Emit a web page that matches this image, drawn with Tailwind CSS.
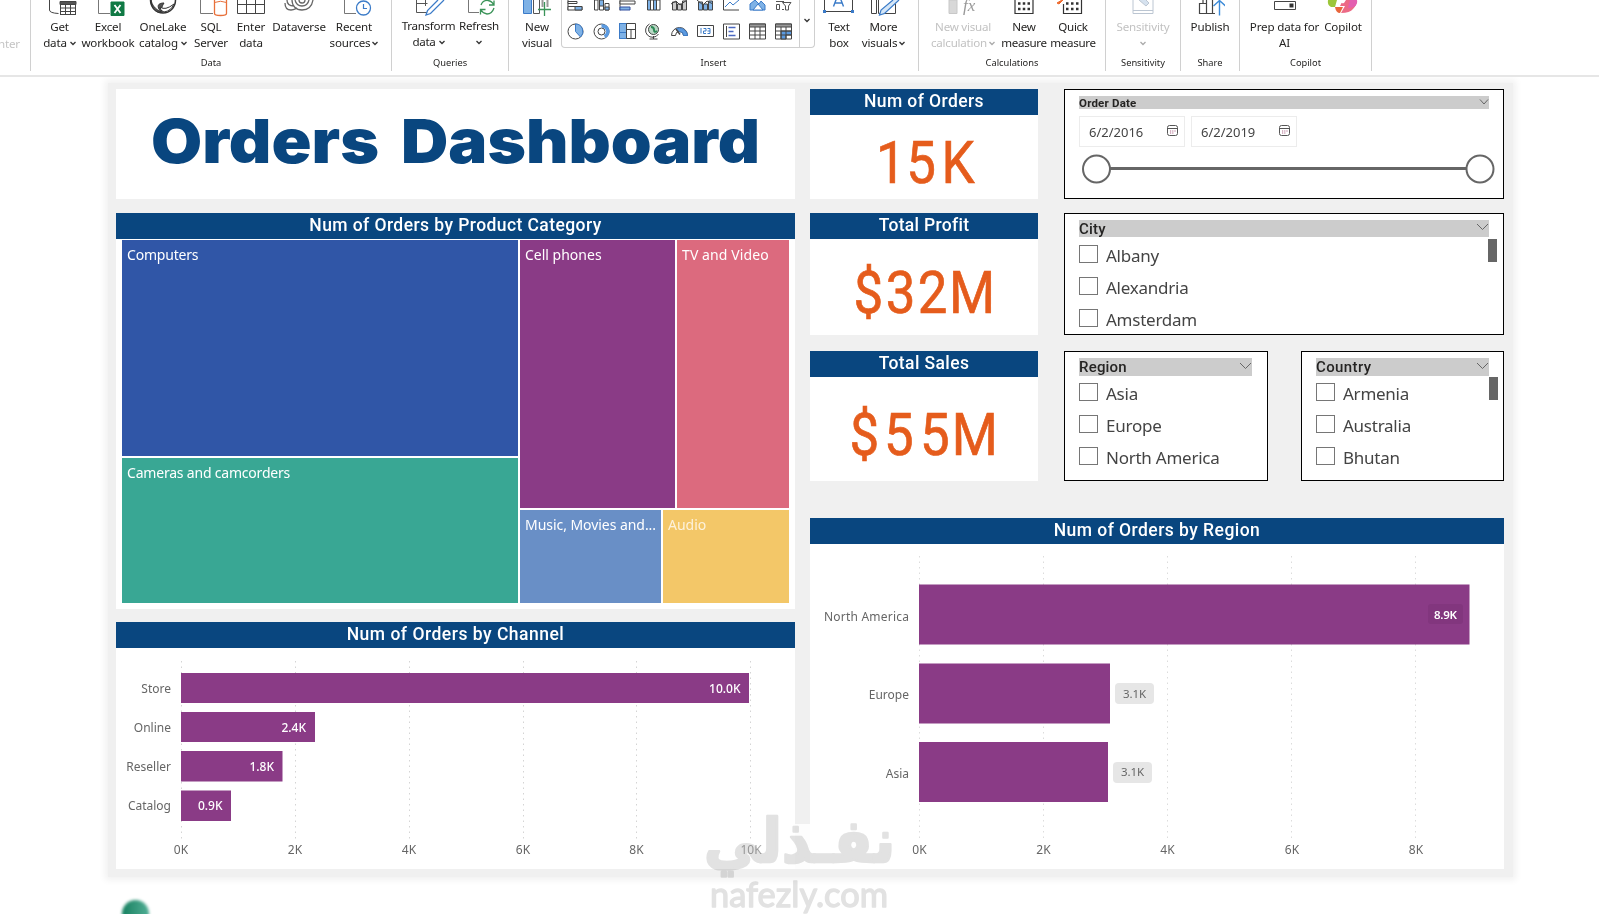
<!DOCTYPE html>
<html lang="en">
<head>
    <meta charset="UTF-8">
    <meta name="viewport" content="width=device-width, initial-scale=1.0">
    <title>Orders Dashboard</title>
    <script src="https://cdn.jsdelivr.net/npm/@tailwindcss/browser@4"></script>
</head>
<body class="relative h-[914px] w-[1599px] overflow-hidden bg-white font-['Noto_Sans','Open_Sans',sans-serif] text-[#252423]">

    <!-- Ribbon -->
    <header class="relative z-10 flex h-[77px] border-b-2 border-[#e6e6e6] bg-white text-center text-[11.6px] leading-4 tracking-[-0.15px] whitespace-nowrap">
        <div class="flex h-[71px] w-[31px] items-start justify-end border-r border-[#d0d0d0] pt-[36px] pr-[10px] text-[#c4c4c4]">nter</div>

        <!-- Data -->
        <div class="flex h-[71px] w-[361px] flex-col border-r border-[#d0d0d0]">
            <div class="flex h-[55px] pl-[5px]">
                <div class="flex w-[47px] flex-col items-center">
                    <svg class="h-[19px] w-[40px] shrink-0" viewBox="0 0 40 19" fill="none" stroke="#444"><path d="M9.500 0V10q0 3 9 3.500"/><rect x="20.500" y="1.500" width="15" height="13" fill="#fff"/><path d="M20 1.500h16v3H20z" fill="#555"/><path d="M20.500 8h15M20.500 11.500h15M25.500 4v11M30.500 4v11"/></svg>
                    <span>Get</span><span class="flex items-center">data<svg class="ml-[3px] h-2 w-[6px]" viewBox="0 0 6 8" fill="none" stroke="#333" stroke-width="1.300"><path d="M.5 3 3 5.500 5.500 3"/></svg></span>
                </div>
                <div class="flex w-[50px] flex-col items-center">
                    <svg class="h-[19px] w-[40px] shrink-0" viewBox="0 0 40 19" fill="none" stroke="#777"><path d="M10.500 0V13.500H22"/><path d="M23 2h13v13.500H23z" fill="#117a45" stroke="#117a45"/><path d="m26.500 5 6 8m0-8-6 8" stroke="#fff" stroke-width="1.800"/></svg>
                    <span>Excel</span><span>workbook</span>
                </div>
                <div class="flex w-[60px] flex-col items-center">
                    <svg class="h-[19px] w-[30px] shrink-0" viewBox="0 0 30 19" fill="none" stroke="#333"><path d="M2.500 0a12.500 13 0 0 0 25 0" stroke-width="1.500"/><path d="M3 0c1 5 4 9 10 12C8 6 10 3 16 3c-2 3-3 6-1 9C8 14 3 8 3 0z" fill="#555"/><path d="M12 7q5 4 14-3-3 7-10 8-4-1-4-5z" fill="#fff" stroke="#333"/></svg>
                    <span>OneLake</span><span class="flex items-center">catalog<svg class="ml-[3px] h-2 w-[6px]" viewBox="0 0 6 8" fill="none" stroke="#333" stroke-width="1.300"><path d="M.5 3 3 5.500 5.500 3"/></svg></span>
                </div>
                <div class="flex w-[36px] flex-col items-center">
                    <svg class="h-[19px] w-[36px] shrink-0" viewBox="0 0 36 19" fill="none" stroke="#777"><path d="M7.500 0V13.500H20"/><path d="M21.500 0v13.500q0 2 6 2t6-2V0" fill="#fff" stroke="#e8703a" stroke-width="1.300"/><path d="M21.500 2.500q6-2.500 12 0" stroke="#e8703a"/></svg>
                    <span>SQL</span><span>Server</span>
                </div>
                <div class="flex w-[44px] flex-col items-center">
                    <svg class="h-[19px] w-[30px] shrink-0" viewBox="0 0 30 19" fill="none" stroke="#444"><path d="M1.500 0v13.500h27V0M1.500 4.500h27M10.500 0v13.500M19.500 0v13.500"/></svg>
                    <span>Enter</span><span>data</span>
                </div>
                <div class="flex w-[52px] flex-col items-center">
                    <svg class="h-[19px] w-[30px] shrink-0" viewBox="0 0 30 19" fill="none" stroke="#666" stroke-width="1.300"><path d="M1 3c0 4 2 7 6 7 3 0 4-1 6-2"/><path d="M3 0c0 4 3 6 7 6M8 0c0 6 4 10 10 10 6 0 10-4 11-10"/><path d="M11 0c1 4 3 6 7 6 4 0 6-2 7-6"/><ellipse cx="18" cy="0" rx="3" ry="3"/></svg>
                    <span>Dataverse</span>
                </div>
                <div class="flex w-[58px] flex-col items-center">
                    <svg class="h-[19px] w-[40px] shrink-0" viewBox="0 0 40 19" fill="none" stroke="#777"><path d="M10.500 0V13.500H22"/><circle cx="29.500" cy="8" r="7" fill="#fff" stroke="#3b7bc8" stroke-width="1.300"/><path d="M29.500 4v4.500h3.500" stroke="#3b7bc8" stroke-width="1.200"/></svg>
                    <span>Recent</span><span class="flex items-center">sources<svg class="ml-[2px] h-2 w-[6px]" viewBox="0 0 6 8" fill="none" stroke="#333" stroke-width="1.300"><path d="M.5 3 3 5.500 5.500 3"/></svg></span>
                </div>
            </div>
            <div class="text-[9.3px] tracking-normal">Data</div>
        </div>

        <!-- Queries -->
        <div class="flex h-[71px] w-[117px] flex-col border-r border-[#d0d0d0]">
            <div class="flex h-[55px] pl-[6px]">
                <div class="flex w-[61px] flex-col items-center tracking-[-0.3px]">
                    <svg class="h-[18px] w-[36px] shrink-0" viewBox="0 0 36 18" fill="none" stroke="#555"><path d="M5.500 0v12.500H17M5.500 3.500h11M14.500 0v6"/><path d="M27 0 16.500 10.500 15 15l4.500-1.500L33 0" fill="#fff" stroke="#3b7bc8" stroke-width="1.300"/></svg>
                    <span>Transform</span><span class="flex items-center">data<svg class="ml-[3px] h-2 w-[6px]" viewBox="0 0 6 8" fill="none" stroke="#333" stroke-width="1.300"><path d="M.5 3 3 5.500 5.500 3"/></svg></span>
                </div>
                <div class="flex w-[40px] flex-col items-center tracking-[-0.25px]">
                    <svg class="h-[18px] w-[34px] shrink-0" viewBox="0 0 34 18" fill="none" stroke="#777"><path d="M6.500 0V12.500H17"/><path d="M19 5q2-5 7-4.500 4 .5 5.500 4M32 .5V5h-5M32 8q-2 6-7 6-4-.5-6-4M18.500 14.500V9.500h5" stroke="#3a9358" stroke-width="1.300"/></svg>
                    <span>Refresh</span><svg class="mt-[4px] h-2 w-[6px]" viewBox="0 0 6 8" fill="none" stroke="#333" stroke-width="1.300"><path d="M.5 3 3 5.500 5.500 3"/></svg>
                </div>
            </div>
            <div class="text-[9.3px] tracking-normal">Queries</div>
        </div>

        <!-- Insert -->
        <div class="flex h-[71px] w-[410px] flex-col border-r border-[#d0d0d0]">
            <div class="flex h-[55px] pl-1">
                <div class="flex w-[48px] flex-col items-center">
                    <svg class="h-[19px] w-[30px] shrink-0" viewBox="0 0 30 19" fill="none" stroke="#555"><path d="M1.500 0v13.500h8V0" fill="#7fb2e6" stroke="#3b7bc8"/><path d="M11.500 0v13.500h6V0" fill="#fff"/><path d="M20.500 0v7M25.500 0v7" stroke="#999" stroke-width="2"/><path d="M16 9.500h13M22.500 2v14" stroke="#3a9358" stroke-width="1.300"/></svg>
                    <span>New</span><span>visual</span>
                </div>

                <!-- Visual gallery -->
                <div class="flex h-[48px] w-[254px] rounded-b-[4px] border border-t-0 border-[#cfcfcf]">
                    <div class="w-[237px]">
                        <div class="grid h-[40px] w-[235px] grid-cols-9 content-between justify-items-center">
                            <svg class="h-[12px] w-[17px]" viewBox="0 0 17 12" fill="#fff" stroke="#444"><path d="M1 0v10.500"/><path d="M1 1.500h9v2H1zM1 6.500h14v3.500H1z"/><path d="M8 6.500h7V10H8z" fill="#7fb2e6"/></svg>
                            <svg class="h-[12px] w-[17px]" viewBox="0 0 17 12" fill="#fff" stroke="#444"><path d="M1.500 10V0h3.500v10zM6.500 10V0h4v10zM12 10V3.500h4V10z"/><path d="M6.500 0h4v6h-4zM12 7h4v3h-4z" fill="#7fb2e6"/></svg>
                            <svg class="h-[12px] w-[17px]" viewBox="0 0 17 12" fill="#fff" stroke="#444"><path d="M1 0v10.500"/><path d="M1 1h15v3H1z"/><path d="M1 7h10v3H1z" fill="#7fb2e6" stroke="#334fa0"/></svg>
                            <svg class="h-[12px] w-[17px]" viewBox="0 0 17 12" fill="#fff" stroke="#444"><path d="M2.500 10V0h3v10zM8.500 10V0h3v10z" fill="#7fb2e6"/><path d="M5.500 0h3v10h-3zM11.500 0h3.500v10h-3.500z"/></svg>
                            <svg class="h-[12px] w-[17px]" viewBox="0 0 17 12" fill="#ccc" stroke="#444"><path d="M1.500 10V2h4v8zM6.500 10V4h4v6zM11.500 10V1h4v9z"/><path d="m0 4 5-3 4 4 7-5" fill="none"/></svg>
                            <svg class="h-[12px] w-[17px]" viewBox="0 0 17 12" fill="#7fb2e6" stroke="#444"><path d="M1.500 10V2h4v8zM6.500 10V4h4v6zM11.500 10V1h4v9z"/><path d="m0 0 6 5 4-4 6 3" fill="none"/></svg>
                            <svg class="h-[12px] w-[17px]" viewBox="0 0 17 12" fill="none" stroke="#444"><path d="M.5 0v10H16"/><path d="m2 7 5-5 3 3 6-5" stroke="#3b7bc8"/></svg>
                            <svg class="h-[12px] w-[17px]" viewBox="0 0 17 12" fill="#7fb2e6" stroke="#3b7bc8"><path d="M1 10V4L6 0l4 4 2-3 4 4v5z"/><path d="m4 10 5-6 5 6z" fill="#fff"/></svg>
                            <svg class="h-[12px] w-[17px]" viewBox="0 0 17 12" fill="none" stroke="#555"><path d="M1 1.500h8M1.500 4.500h3v5h-3zM9 9.500H7"/><path d="M7.500 2.500H16L13.500 6v4h-3V6z"/></svg>

                            <svg class="h-[17px] w-[17px]" viewBox="0 0 17 17" fill="#fff" stroke="#444"><circle cx="8.500" cy="8.500" r="7.500"/><path d="M8.500 1a7.500 7.500 0 0 1 5 13l-5-5.500z" fill="#7fb2e6" stroke="#3b7bc8"/></svg>
                            <svg class="h-[17px] w-[17px]" viewBox="0 0 17 17" fill="none" stroke="#444"><circle cx="8.500" cy="8.500" r="7.500"/><circle cx="8.500" cy="8.500" r="3.500"/><path d="M8.500 3a5.500 5.500 0 0 1 3 10.500" stroke="#5b9ae0" stroke-width="3.500"/></svg>
                            <svg class="h-[17px] w-[17px]" viewBox="0 0 17 17" fill="#fff" stroke="#444"><path d="M.5.5h16v15H.5z"/><path d="M.5.5h7v9h-7zM.5 9.500h7v6h-7z" fill="#7fb2e6" stroke="#3b7bc8"/><path d="M7.500.5v15M7.500 6.500h9M12 6.500v9"/></svg>
                            <svg class="h-[17px] w-[17px]" viewBox="0 0 17 17" fill="none" stroke="#444"><circle cx="8.500" cy="6.500" r="5" fill="#b9d8c5"/><path d="M6 4q3 0 3 3t3 1" stroke="#2c8a55" stroke-width="2"/><path d="M4.500 1a7 7 0 1 0 9 10M8.500 13v3M4.500 16h8"/></svg>
                            <svg class="h-[17px] w-[17px]" viewBox="0 0 17 17" fill="none" stroke="#444"><path d="M.5 12.500a8 8 0 0 1 16 0h-4a4 4 0 0 0-8 0z"/><path d="M5 6a8 8 0 0 1 11.500 6.500h-4a4 4 0 0 0-4-4z" fill="#5b9ae0" stroke="#3b7bc8"/><path d="m5 6 4 5.500" stroke-width="1.500"/></svg>
                            <svg class="h-[17px] w-[17px]" viewBox="0 0 17 17" fill="#fff" stroke="#444"><path d="M.5 2.500h16v11H.5z"/><path d="M4 5v5.500M6.500 5.500h2.500v2.500H6.500v2.500H9M10.500 5.500H13v5h-2.500M10.500 8H13" fill="none" stroke="#3b7bc8"/></svg>
                            <svg class="h-[17px] w-[17px]" viewBox="0 0 17 17" fill="#fff" stroke="#444"><path d="M.5 1h16v15H.5z"/><path d="M3.500 3v11" /><path d="M5.500 4.500h7M5.500 8.500h5M5.500 12.500h7" stroke="#4a67c0" stroke-width="1.500"/></svg>
                            <svg class="h-[17px] w-[17px]" viewBox="0 0 17 17" fill="#fff" stroke="#444"><path d="M.5 1h16v15H.5z"/><path d="M.5 1h16v3H.5z" fill="#999"/><path d="M.5 8h16M.5 12h16M6 4v12M11 4v12"/></svg>
                            <svg class="h-[17px] w-[17px]" viewBox="0 0 17 17" fill="#fff" stroke="#444"><path d="M.5 1h16v15H.5z"/><path d="M6 8h10.500v4H11v4H6z" fill="#5b9ae0"/><path d="M.5 1h16v3H.5z" fill="#999"/><path d="M.5 8h16M.5 12h16M6 4v12M11 4v12"/></svg>
                        </div>
                    </div>
                    <div class="flex h-[47px] flex-1 items-start justify-center border-l border-[#cfcfcf] pt-[16px]"><svg class="h-2 w-[6px]" viewBox="0 0 6 8" fill="none" stroke="#333" stroke-width="1.300"><path d="M.5 3 3 5.500 5.500 3"/></svg></div>
                </div>

                <div class="flex w-[48px] flex-col items-center">
                    <svg class="h-[19px] w-[32px] shrink-0" viewBox="0 0 32 19" fill="none" stroke="#444"><path d="M1.500 0v11.500h28V0"/><path d="M0 10h3v3H0zM28 10h3v3h-3z" fill="#3b7bc8" stroke="none"/><path d="M10.500 6.500 14.500-4h2l4 10.500M12 3h7" stroke="#3b7bc8" stroke-width="1.400"/></svg>
                    <span>Text</span><span>box</span>
                </div>
                <div class="flex w-[41px] flex-col items-center">
                    <svg class="h-[19px] w-[32px] shrink-0" viewBox="0 0 32 19" fill="none" stroke="#444"><path d="M3.500 0v13.500h5V0M10.500 0v13.500h17V4"/><path d="m25 0-12 10-1.500 5 5-1.500L31 0" fill="#d5e6f7" stroke="#3b7bc8" stroke-width="1.200"/></svg>
                    <span>More</span><span class="flex items-center">visuals<svg class="ml-[2px] h-2 w-[6px]" viewBox="0 0 6 8" fill="none" stroke="#333" stroke-width="1.300"><path d="M.5 3 3 5.500 5.500 3"/></svg></span>
                </div>
            </div>
            <div class="text-[9.3px] tracking-normal">Insert</div>
        </div>

        <!-- Calculations -->
        <div class="flex h-[71px] w-[187px] flex-col border-r border-[#d0d0d0]">
            <div class="flex h-[55px] pl-[3px]">
                <div class="flex w-[82px] flex-col items-center tracking-[-0.25px] text-[#c2c2c2]">
                    <svg class="h-[19px] w-[30px] shrink-0" viewBox="0 0 30 19" fill="none" stroke="#c8c8c8"><path d="M1 0h8v13.500H1z" fill="#d8d8d8"/><text x="15" y="11" font-family="Liberation Serif, serif" font-style="italic" font-size="17" letter-spacing="0" fill="#999" stroke="none">fx</text></svg>
                    <span>New visual</span><span class="flex items-center">calculation<svg class="ml-[2px] h-2 w-[6px]" viewBox="0 0 6 8" fill="none" stroke="#aaa" stroke-width="1.300"><path d="M.5 3 3 5.500 5.500 3"/></svg></span>
                </div>
                <div class="flex w-[40px] flex-col items-center tracking-[-0.3px]">
                    <svg class="h-[19px] w-[20px] shrink-0" viewBox="0 0 20 19" fill="none" stroke="#333"><path d="M1 0v13.500h18V0" stroke-width="1.200"/><path d="M4 3.500h12M4 9h12" stroke-width="2.500" stroke-dasharray="2.500 2.250"/></svg>
                    <span>New</span><span>measure</span>
                </div>
                <div class="flex w-[58px] flex-col items-center tracking-[-0.3px]">
                    <svg class="h-[19px] w-[32px] shrink-0" viewBox="0 0 32 19" fill="none" stroke="#333"><path d="M6.500 4v9.500h18V0" stroke-width="1.200"/><path d="M9 3.500h13M9 9h13" stroke-width="2.500" stroke-dasharray="2.500 2.500"/><path d="M0 3 5 0h1L2 4z" fill="#ee6a2c" stroke="#ee6a2c"/></svg>
                    <span>Quick</span><span>measure</span>
                </div>
            </div>
            <div class="text-[9.3px] tracking-normal">Calculations</div>
        </div>

        <!-- Sensitivity -->
        <div class="flex h-[71px] w-[75px] flex-col border-r border-[#d0d0d0]">
            <div class="flex h-[55px] flex-col items-center text-[#c2c2c2]">
                <svg class="h-[19px] w-[22px] shrink-0" viewBox="0 0 22 19" fill="none" stroke="#bcc6d2"><path d="M1 0v13.500h20V0M1 10.500h20"/><path d="m7 0 7 6 3-3-3-3" fill="#d6e2ef"/></svg>
                <span>Sensitivity</span><svg class="mt-1 h-2 w-[6px]" viewBox="0 0 6 8" fill="none" stroke="#aaa" stroke-width="1.300"><path d="M.5 3 3 5.500 5.500 3"/></svg>
            </div>
            <div class="text-[9.3px] tracking-normal">Sensitivity</div>
        </div>

        <!-- Share -->
        <div class="flex h-[71px] w-[59px] flex-col border-r border-[#d0d0d0]">
            <div class="flex h-[55px] flex-col items-center">
                <svg class="h-[19px] w-[30px] shrink-0" viewBox="0 0 30 19" fill="none" stroke="#444" stroke-width="1.200"><path d="M4.500 3.500h7v10h-7zM8 3V0M11.500 0v13.500h6V0M18 13.500h2"/><path d="M24.500 15.500V1M18.500 6l6-5.500 6 5.500" stroke="#3b8ad8" stroke-width="1.400"/></svg>
                <span>Publish</span>
            </div>
            <div class="text-[9.3px] tracking-normal">Share</div>
        </div>

        <!-- Copilot -->
        <div class="flex h-[71px] w-[132px] flex-col border-r border-[#d0d0d0]">
            <div class="flex h-[55px] pl-[5px]">
                <div class="flex w-[79px] flex-col items-center">
                    <svg class="h-[19px] w-[24px] shrink-0" viewBox="0 0 24 19" fill="none" stroke="#444"><path d="M1.500 1.500h21v8h-21z"/><path d="M16.500 3.500h4v4h-4z" fill="#333" stroke="none"/></svg>
                    <span>Prep data for</span><span>AI</span>
                </div>
                <div class="flex w-[38px] flex-col items-center">
                    <svg class="h-[19px] w-[32px] shrink-0" viewBox="0 0 32 19"><path d="M1 0h9L8 7H4Q0 5 1 0z" fill="#9cc63a"/><path d="M8 7h8l-3 6q-4 0-5-6z" fill="#e8663c"/><path d="M16 0h14q0 5-4 9-3 4-12 4l4-7h-5z" fill="#ec6a86"/><path d="M23 0h7q1 4-3 7l-6 1z" fill="#e35fb0"/><path d="M10 0h9l-2 3q-4 1-7-3z" fill="#fff"/></svg>
                    <span>Copilot</span>
                </div>
            </div>
            <div class="text-[9.3px] tracking-normal">Copilot</div>
        </div>
    </header>

    <!-- Report canvas -->
    <main class="mt-[6px] ml-[108px] flex h-[794px] w-[1405px] gap-[15px] bg-[#f0f0f0] pt-[6px] pl-[8px] shadow-[0_0_7px_3px_#f1f1f1]">

        <!-- Left column -->
        <div class="flex w-[679px] flex-col">
            <h1 class="h-[110px] bg-white">
                <svg class="h-[110px] w-[679px]" viewBox="0 0 679 110" font-family="Inter, sans-serif" font-weight="900" font-size="61" fill="#09467f"><text x="35" y="74" textLength="228" lengthAdjust="spacingAndGlyphs">Orders</text><text x="285" y="74" textLength="359" lengthAdjust="spacingAndGlyphs">Dashboard</text></svg>
            </h1>

            <section class="mt-[14px] h-[396px] bg-white">
                <h2 class="h-[26px] bg-[#09467f] text-center font-['Roboto',sans-serif] text-[17.5px] leading-[24px] font-medium tracking-[0.42px] text-white">Num of Orders by Product Category</h2>
                <div class="ml-[6px] flex h-[364px] w-[667px] gap-[2px] pt-[1px] text-[14px] leading-[18px] tracking-[-0.2px] whitespace-nowrap text-white">
                    <div class="flex w-[396px] flex-col gap-[2px]">
                        <div class="h-[216px] bg-[#3056a7] px-[5px] pt-[6px]">Computers</div>
                        <div class="h-[145px] bg-[#39a794] px-[5px] pt-[6px]">Cameras and camcorders</div>
                    </div>
                    <div class="flex w-[269px] flex-col gap-[2px]">
                        <div class="flex h-[268px] gap-[2px]">
                            <div class="w-[155px] bg-[#8a3b86] px-[5px] pt-[6px] tracking-[0px]">Cell phones</div>
                            <div class="w-[112px] bg-[#dc6a7e] px-[5px] pt-[6px] tracking-[0.1px]">TV and Video</div>
                        </div>
                        <div class="flex h-[93px] gap-[2px]">
                            <div class="w-[141px] bg-[#698fc6] px-[5px] pt-[6px] tracking-[-0.05px]">Music, Movies and...</div>
                            <div class="w-[126px] bg-[#f3c768] px-[5px] pt-[6px] tracking-[0px] text-[#fdf2dc]">Audio</div>
                        </div>
                    </div>
                </div>
            </section>

            <section class="mt-[13px] h-[247px] bg-white">
                <h2 class="h-[26px] bg-[#09467f] text-center font-['Roboto',sans-serif] text-[17.5px] leading-[24px] font-medium tracking-[0.5px] text-white">Num of Orders by Channel</h2>
                <svg class="h-[221px] w-[679px]" viewBox="116 648 679 221" font-family="Noto Sans, sans-serif" font-size="12" fill="#666">
                    <path d="M181.500 661v178M295.500 661v178M409.500 661v178M523.500 661v178M636.500 661v178M750.500 661v178" stroke="#d4d4d4" stroke-dasharray="1.500 4"/>
                    <path d="M181 673h568v30H181zM181 712h134v30H181zM181 751h101.500v30.500H181zM181 790.500h50v30.500h-50z" fill="#8a3b86"/>
                    <g text-anchor="end">
                        <text x="171" y="692.500">Store</text><text x="171" y="731.500">Online</text><text x="171" y="770.500">Reseller</text><text x="171" y="809.500">Catalog</text>
                    </g>
                    <g text-anchor="end" fill="#fff" font-weight="500">
                        <text x="740.500" y="692.500">10.0K</text><text x="306" y="731.500">2.4K</text><text x="274" y="770.500">1.8K</text><text x="222.500" y="809.500">0.9K</text>
                    </g>
                    <g text-anchor="middle">
                        <text x="181" y="853.500">0K</text><text x="295" y="853.500">2K</text><text x="409" y="853.500">4K</text><text x="523" y="853.500">6K</text><text x="636.500" y="853.500">8K</text><text x="751" y="853.500" fill="#aaa">10K</text>
                    </g>
                </svg>
            </section>
        </div>

        <!-- Right column -->
        <div class="flex w-[694px] flex-col">
            <div class="flex justify-between">

                <!-- KPI cards -->
                <div class="flex w-[228px] flex-col text-center font-['Roboto',sans-serif]">
                    <div class="h-[110px] bg-white">
                        <h2 class="h-[26px] bg-[#09467f] text-[17.5px] leading-[24px] font-medium tracking-[0.4px] text-white">Num of Orders</h2>
                        <svg class="h-[84px] w-[228px]" viewBox="0 0 228 84"><text transform="scale(.88 1)" x="75 109.500 149.500" y="68" font-size="60" fill="#e55c1c" stroke="#e55c1c" stroke-width=".7">15K</text></svg>
                    </div>
                    <div class="mt-[14px] h-[122px] bg-white">
                        <h2 class="h-[26px] bg-[#09467f] text-[17.5px] leading-[24px] font-medium tracking-[0.3px] text-white">Total Profit</h2>
                        <svg class="h-[96px] w-[228px]" viewBox="0 0 228 96"><text transform="scale(.88 1)" x="49.500 86 122.500 158" y="74" font-size="60" fill="#e55c1c" stroke="#e55c1c" stroke-width=".7">$32M</text></svg>
                    </div>
                    <div class="mt-[16px] h-[130px] bg-white">
                        <h2 class="h-[26px] bg-[#09467f] text-[17.5px] leading-[24px] font-medium tracking-[0.4px] text-white">Total Sales</h2>
                        <svg class="h-[104px] w-[228px]" viewBox="0 0 228 104"><text transform="scale(.88 1)" x="45 84 125 161" y="78.500" font-size="60" fill="#e55c1c" stroke="#e55c1c" stroke-width=".7">$55M</text></svg>
                    </div>
                </div>

                <!-- Slicers -->
                <div class="flex w-[440px] flex-col text-[17px] leading-[22px] tracking-[-0.25px] text-[#444]">
                    <div class="h-[110px] border border-black bg-white pt-[6px] pl-[14px]">
                        <div class="flex h-[13px] w-[410px] items-center justify-between bg-[#ccc] font-['Roboto',sans-serif] text-[11.5px] font-bold tracking-[0.2px] text-[#252423]">
                            <span>Order Date</span>
                            <svg class="mb-[2px] h-[8px] w-[10px]" viewBox="0 0 10 8" fill="none" stroke="#666"><path d="m1 1.500 4 4.500 4-4.500"/></svg>
                        </div>
                        <div class="mt-[7px] flex gap-[6px] text-[13px] tracking-normal">
                            <div class="flex h-[31px] w-[106px] items-center justify-between border border-[#ececec] pr-[6px] pl-[9px]">6/2/2016
                                <svg class="mb-[3px] h-[11px] w-[11px]" viewBox="0 0 11 11" fill="none" stroke="#555"><rect x=".5" y=".5" width="10" height="10" rx="2"/><path d="M.5 3.500h10"/><path d="M3 6h6M3 8h4" stroke="#b06a8c" stroke-dasharray="1.200 1"/></svg>
                            </div>
                            <div class="flex h-[31px] w-[106px] items-center justify-between border border-[#ececec] pr-[6px] pl-[9px]">6/2/2019
                                <svg class="mb-[3px] h-[11px] w-[11px]" viewBox="0 0 11 11" fill="none" stroke="#555"><rect x=".5" y=".5" width="10" height="10" rx="2"/><path d="M.5 3.500h10"/><path d="M3 6h6M3 8h4" stroke="#b06a8c" stroke-dasharray="1.200 1"/></svg>
                            </div>
                        </div>
                        <svg class="mt-[7px] h-[31px] w-[418px]" viewBox="1079 154 418 31" fill="#fff" stroke="#666"><path d="M1110 168.500h357" stroke-width="3"/><circle cx="1096.500" cy="169" r="13.500" stroke-width="2"/><circle cx="1480" cy="169" r="13.500" stroke-width="2"/></svg>
                    </div>

                    <div class="relative mt-[14px] h-[122px] border border-black bg-white pt-[6px] pl-[14px]">
                        <div class="flex h-[17px] w-[410px] items-center justify-between bg-[#ccc] font-['Roboto',sans-serif] text-[15px] font-medium tracking-[0.2px] text-[#252423]">
                            <span>City</span>
                            <svg class="mb-[3px] h-[8px] w-[13px]" viewBox="0 0 13 8" fill="none" stroke="#666"><path d="m1 1 5.500 5.500L12 1"/></svg>
                        </div>
                        <div class="flex flex-col gap-[10px] pt-[8px]">
                            <div class="flex h-[22px] gap-[8px]"><span class="h-[18px] w-[19px] border border-[#767676]"></span>Albany</div>
                            <div class="flex h-[22px] gap-[8px]"><span class="h-[18px] w-[19px] border border-[#767676]"></span>Alexandria</div>
                            <div class="flex h-[22px] gap-[8px]"><span class="h-[18px] w-[19px] border border-[#767676]"></span>Amsterdam</div>
                        </div>
                        <div class="absolute top-[25px] right-[6px] h-[23px] w-[9px] bg-[#666]"></div>
                    </div>

                    <div class="mt-[16px] flex justify-between">
                        <div class="h-[130px] w-[204px] border border-black bg-white pt-[6px] pl-[14px]">
                            <div class="flex h-[18px] w-[173px] items-center justify-between bg-[#ccc] font-['Roboto',sans-serif] text-[15px] font-medium tracking-[0.2px] text-[#252423]">
                                <span>Region</span>
                                <svg class="mb-[3px] h-[8px] w-[13px]" viewBox="0 0 13 8" fill="none" stroke="#666"><path d="m1 1 5.500 5.500L12 1"/></svg>
                            </div>
                            <div class="flex flex-col gap-[10px] pt-[7px] whitespace-nowrap">
                                <div class="flex h-[22px] gap-[8px]"><span class="h-[18px] w-[19px] border border-[#767676]"></span>Asia</div>
                                <div class="flex h-[22px] gap-[8px]"><span class="h-[18px] w-[19px] border border-[#767676]"></span>Europe</div>
                                <div class="flex h-[22px] gap-[8px]"><span class="h-[18px] w-[19px] border border-[#767676]"></span>North America</div>
                            </div>
                        </div>
                        <div class="relative h-[130px] w-[203px] border border-black bg-white pt-[6px] pl-[14px]">
                            <div class="flex h-[18px] w-[173px] items-center justify-between bg-[#ccc] font-['Roboto',sans-serif] text-[15px] font-medium tracking-[0.4px] text-[#252423]">
                                <span>Country</span>
                                <svg class="mb-[3px] h-[8px] w-[13px]" viewBox="0 0 13 8" fill="none" stroke="#666"><path d="m1 1 5.500 5.500L12 1"/></svg>
                            </div>
                            <div class="flex flex-col gap-[10px] pt-[7px]">
                                <div class="flex h-[22px] gap-[8px]"><span class="h-[18px] w-[19px] border border-[#767676]"></span>Armenia</div>
                                <div class="flex h-[22px] gap-[8px]"><span class="h-[18px] w-[19px] border border-[#767676]"></span>Australia</div>
                                <div class="flex h-[22px] gap-[8px]"><span class="h-[18px] w-[19px] border border-[#767676]"></span>Bhutan</div>
                            </div>
                            <div class="absolute top-[25px] right-[5px] h-[23px] w-[9px] bg-[#666]"></div>
                        </div>
                    </div>
                </div>
            </div>

            <section class="mt-[37px] h-[351px] bg-white">
                <h2 class="h-[26px] bg-[#09467f] text-center font-['Roboto',sans-serif] text-[17.5px] leading-[24px] font-medium tracking-[0.45px] text-white">Num of Orders by Region</h2>
                <svg class="h-[325px] w-[694px]" viewBox="810 544 694 325" font-family="Noto Sans, sans-serif" font-size="12" fill="#666">
                    <path d="M919.500 556v283M1043.500 556v283M1167.500 556v283M1291.500 556v283M1415.500 556v283" stroke="#dcdcdc" stroke-dasharray="1.500 4"/>
                    <path d="M919 584.500h550.500v60H919zM919 663.500h191v60H919zM919 742h189v60H919z" fill="#8a3b86"/>
                    <rect x="1428" y="604" width="35" height="20" rx="3" fill="#82367e"/>
                    <rect x="1115" y="683" width="39" height="21" rx="4" fill="#e6e6e6"/>
                    <rect x="1113" y="762" width="39" height="21" rx="4" fill="#e6e6e6"/>
                    <g text-anchor="end">
                        <text x="909" y="620.500" textLength="85">North America</text><text x="909" y="699">Europe</text><text x="909" y="777.500">Asia</text>
                    </g>
                    <g text-anchor="middle">
                        <text x="1445.500" y="618.500" font-size="11.500" fill="#fff" font-weight="600" textLength="23">8.9K</text><text x="1134.500" y="697.500" font-size="11.500" textLength="23">3.1K</text><text x="1132.500" y="775.500" font-size="11.500" textLength="23">3.1K</text>
                        <text x="919.500" y="853.500">0K</text><text x="1043.500" y="853.500">2K</text><text x="1167.500" y="853.500">4K</text><text x="1292" y="853.500">6K</text><text x="1416" y="853.500">8K</text>
                    </g>
                </svg>
            </section>
        </div>
    </main>

    <!-- Watermark -->
    <div class="absolute top-[824px] left-[795px] h-[45px] w-[15px] bg-[#fdfdfd]"></div>
    <svg class="absolute top-[810px] left-[696px] h-[104px] w-[210px] overflow-visible mix-blend-multiply" viewBox="696 810 210 104" fill="#e2e2e2" stroke="#e2e2e2" stroke-linejoin="round">
        <text x="704" y="862" textLength="191" lengthAdjust="spacingAndGlyphs" font-family="DejaVu Sans, sans-serif" font-weight="700" font-size="60" stroke-width="2.500">نفـذلي</text>
        <text x="710" y="906.500" textLength="178" lengthAdjust="spacingAndGlyphs" font-family="Lato, sans-serif" font-size="34" stroke-width="1.300">nafezly.com</text>
    </svg>

    <!-- Avatar edge at the bottom -->
    <div class="absolute top-[900px] left-[122px] h-[28px] w-[27px] rounded-full bg-linear-to-r from-[#12805f] to-[#4fae95] blur-[1.5px]"></div>
</body>
</html>
